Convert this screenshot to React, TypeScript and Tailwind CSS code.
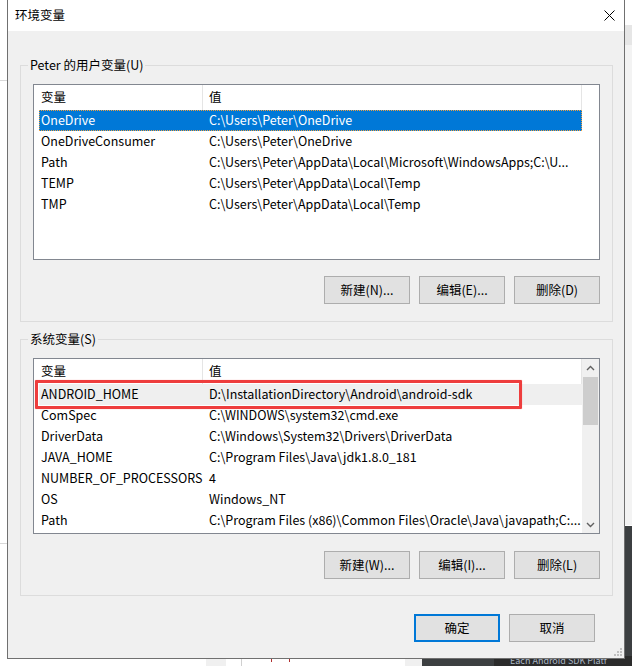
import React from 'react'

type Row = { name: string; value: string }

const userVars: Row[] = [
  { name: 'OneDrive', value: 'C:\\Users\\Peter\\OneDrive' },
  { name: 'OneDriveConsumer', value: 'C:\\Users\\Peter\\OneDrive' },
  { name: 'Path', value: 'C:\\Users\\Peter\\AppData\\Local\\Microsoft\\WindowsApps;C:\\U...' },
  { name: 'TEMP', value: 'C:\\Users\\Peter\\AppData\\Local\\Temp' },
  { name: 'TMP', value: 'C:\\Users\\Peter\\AppData\\Local\\Temp' },
]

const sysVars: Row[] = [
  { name: 'ANDROID_HOME', value: 'D:\\InstallationDirectory\\Android\\android-sdk' },
  { name: 'ComSpec', value: 'C:\\WINDOWS\\system32\\cmd.exe' },
  { name: 'DriverData', value: 'C:\\Windows\\System32\\Drivers\\DriverData' },
  { name: 'JAVA_HOME', value: 'C:\\Program Files\\Java\\jdk1.8.0_181' },
  { name: 'NUMBER_OF_PROCESSORS', value: '4' },
  { name: 'OS', value: 'Windows_NT' },
  { name: 'Path', value: 'C:\\Program Files (x86)\\Common Files\\Oracle\\Java\\javapath;C:...' },
]

function WinButton({ label, primary }: { label: string; primary?: boolean }) {
  return (
    <div
      className={
        primary
          ? 'w-[86px] h-[28px] flex items-center justify-center bg-[#e1e1e1] border-2 border-[#0078d7] text-black'
          : 'w-[86px] h-[28px] flex items-center justify-center bg-[#e1e1e1] border border-[#adadad] text-black'
      }
    >
      {label}
    </div>
  )
}

function Chevron({ up }: { up?: boolean }) {
  return (
    <svg width="9" height="6" viewBox="0 0 9 6">
      <polyline
        points={up ? '1,5 4.5,1.5 8,5' : '1,1 4.5,4.5 8,1'}
        fill="none"
        stroke="#606060"
        strokeWidth="1.4"
      />
    </svg>
  )
}

function ListView({
  rows,
  selected,
  hovered,
  scrollbar,
  marked,
}: {
  rows: Row[]
  selected?: number
  hovered?: number
  scrollbar?: boolean
  marked?: boolean
}) {
  return (
    <div className="relative h-[176px] border border-[#828790] bg-white flex">
      <div className="flex-1 flex flex-col">
        {/* header */}
        <div className="h-[25px] flex shrink-0">
          <div className="w-[169px] pl-[7px] border-r border-[#e5e5e5] flex items-center">变量</div>
          <div className="w-[379px] pl-[6px] border-r border-[#e5e5e5] flex items-center">值</div>
        </div>
        {rows.map((r, i) => (
          <div
            key={r.name + i}
            className={
              i === selected
                ? 'ml-[5px] w-[543px] h-[21px] flex items-center bg-[#0078d7] text-white outline-1 outline-dotted outline-[#f0a040] -outline-offset-1'
                : i === hovered
                  ? 'ml-[5px] w-[543px] h-[21px] flex items-center bg-[#efefef]'
                  : 'ml-[5px] w-[543px] h-[21px] flex items-center'
            }
          >
            <div className="w-[164px] pl-[2px] whitespace-nowrap overflow-hidden">{r.name}</div>
            <div className="flex-1 pl-[6px] whitespace-nowrap overflow-hidden">{r.value}</div>
          </div>
        ))}
      </div>
      {scrollbar && (
        <div className="w-[17px] bg-[#f0f0f0] flex flex-col items-center">
          <div className="h-[17px] flex items-center justify-center">
            <Chevron up />
          </div>
          <div className="w-[15px] h-[48px] bg-[#cdcdcd] mt-px" />
          <div className="flex-1" />
          <div className="h-[17px] flex items-center justify-center">
            <Chevron />
          </div>
        </div>
      )}
      {marked && (
        <div className="absolute left-[1px] top-[21px] w-[487px] h-[29px] border-[3px] border-[#ee3d3d] rounded-[1px] shadow-[0_0_1px_#f08080]" />
      )}
    </div>
  )
}

function Group({ title, children }: { title: string; children: React.ReactNode }) {
  return (
    <div className="relative ml-[12px] mr-[11px] border border-[#dcdcdc] px-[12px] pt-[18px]">
      <span className="absolute left-[7px] -top-[9px] px-[2px] bg-[#f0f0f0] leading-[16px]">{title}</span>
      {children}
    </div>
  )
}

export default function App() {
  return (
    <div
      className="relative w-[632px] h-[666px] overflow-hidden bg-white text-[12.5px] text-black"
      style={{ fontFamily: '"Noto Sans CJK SC", "Noto Sans", sans-serif' }}
    >
      {/* windows behind the dialog */}
      <div className="absolute left-0 top-[80px] w-[7px] h-px bg-[#d8d8d8]" />
      <div className="absolute left-0 top-[543px] w-[7px] h-px bg-[#d8d8d8]" />
      <div className="absolute right-0 top-[25px] w-[8px] h-[20px] bg-[#e6e6e6]" />
      <div className="absolute right-0 top-[45px] w-[8px] h-[480px] bg-[#f3f3f3]" />
      <div className="absolute right-0 top-[526px] w-[8px] h-[140px] bg-[#3c3f41]" />
      <div className="absolute left-[206px] top-[659px] w-[20px] h-[7px] bg-[#f0f0f0]" />
      <div className="absolute left-[241px] top-[659px] w-px h-[7px] bg-[#d0d0d0]" />
      <div className="absolute left-[271px] top-[659px] w-px h-[3px] bg-[#b03030]" />
      <div className="absolute left-[289px] top-[659px] w-px h-[3px] bg-[#b03030]" />
      <div className="absolute left-[405px] top-[659px] w-[17px] h-[7px] bg-[#f0f0f0]" />
      <div className="absolute left-[422px] top-[640px] w-[210px] h-[26px] bg-[#3c3f41] overflow-hidden">
        <div className="absolute left-[72px] top-[16px] w-[138px] h-[10px] bg-[#2b2b2b]" />
        <div className="absolute left-[88px] top-[16px] text-[9px] leading-[10px] text-[#a9b7c6] whitespace-nowrap">
          Each Android SDK Platf
        </div>
      </div>

      {/* dialog */}
      <div className="relative ml-[7px] w-[618px] h-[659px] border-x border-b border-[#707070] bg-[#f0f0f0] flex flex-col">
        <div className="h-[31px] bg-white flex items-center justify-between pl-[7px] pr-[9px] shrink-0">
          <span>环境变量</span>
          <svg width="11" height="11" viewBox="0 0 11 11">
            <path d="M0.5 0.5 L10.5 10.5 M10.5 0.5 L0.5 10.5" stroke="#000" strokeWidth="1" />
          </svg>
        </div>

        <div className="mt-[34px]">
          <Group title="Peter 的用户变量(U)">
            <ListView rows={userVars} selected={0} />
            <div className="mt-[16px] mb-[17px] flex justify-end gap-[9px]">
              <WinButton label="新建(N)..." />
              <WinButton label="编辑(E)..." />
              <WinButton label="删除(D)" />
            </div>
          </Group>
        </div>

        <div className="mt-[17px]">
          <Group title="系统变量(S)">
            <ListView rows={sysVars} hovered={0} scrollbar marked />
            <div className="mt-[17px] mb-[16px] flex justify-end gap-[9px]">
              <WinButton label="新建(W)..." />
              <WinButton label="编辑(I)..." />
              <WinButton label="删除(L)" />
            </div>
          </Group>
        </div>

        <div className="mt-[18px] pr-[29px] flex justify-end gap-[9px]">
          <WinButton label="确定" primary />
          <WinButton label="取消" />
        </div>

        {/* resize grip */}
        <div className="absolute right-[2px] bottom-[2px] grid grid-cols-3 gap-px">
          <span className="w-[2px] h-[2px]" />
          <span className="w-[2px] h-[2px]" />
          <span className="w-[2px] h-[2px] bg-[#c0c0c0]" />
          <span className="w-[2px] h-[2px]" />
          <span className="w-[2px] h-[2px] bg-[#c0c0c0]" />
          <span className="w-[2px] h-[2px] bg-[#c0c0c0]" />
          <span className="w-[2px] h-[2px] bg-[#c0c0c0]" />
          <span className="w-[2px] h-[2px] bg-[#c0c0c0]" />
          <span className="w-[2px] h-[2px] bg-[#c0c0c0]" />
        </div>
      </div>
    </div>
  )
}
